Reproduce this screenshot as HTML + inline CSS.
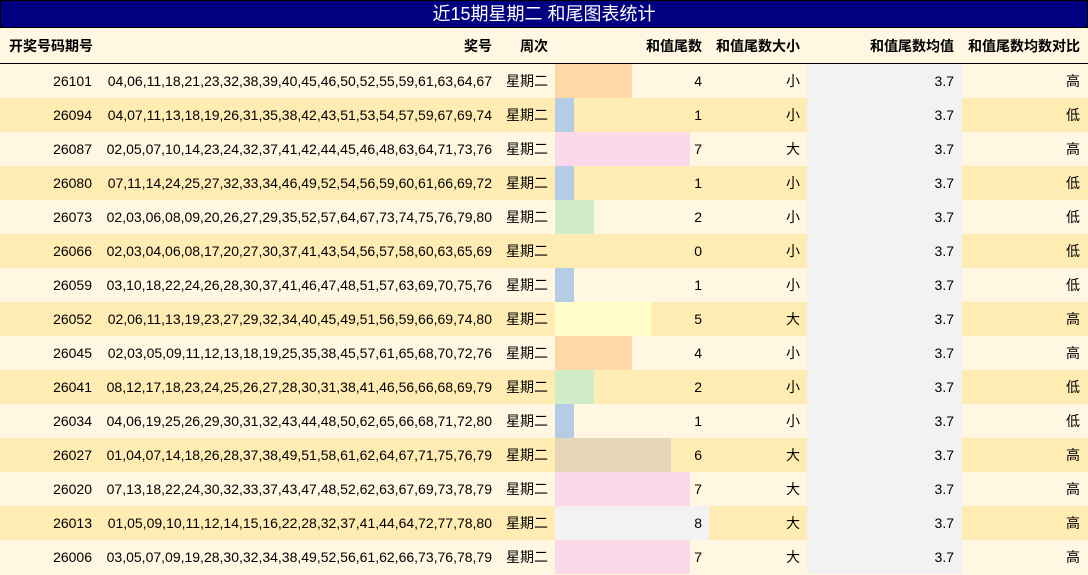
<!DOCTYPE html>
<html><head><meta charset="utf-8"><style>
*{margin:0;padding:0;box-sizing:border-box}
body{width:1088px;height:575px;overflow:hidden;background:#fff7e1;font-family:"Liberation Sans","Noto Sans CJK SC",sans-serif;font-size:14px;color:#000;position:relative}
.t{position:absolute;left:0;top:0;width:1088px;height:28px;background:#000080;border:1px solid #000;color:#fff;font-size:18px;text-align:center;line-height:26px}
.h{position:absolute;left:0;top:28px;width:1088px;height:36px;background:#fff7e1;border-bottom:1px solid #000;font-weight:bold}
.r{position:absolute;left:0;width:1088px;height:34px}
.c{position:absolute;top:0;height:100%;line-height:34px;text-align:right;white-space:nowrap}
.h .c{line-height:36px}
.b{position:absolute;left:555px;top:0;height:34px}
.g{position:absolute;left:807px;top:0;width:155px;height:34px;background:#f2f2f2}
</style></head><body>
<div class="t">近15期星期二 和尾图表统计</div>
<div class="h">
<div class="c" style="left:0;width:93px">开奖号码期号</div>
<div class="c" style="left:100px;width:392px">奖号</div>
<div class="c" style="left:497px;width:51px">周次</div>
<div class="c" style="left:555px;width:147px">和值尾数</div>
<div class="c" style="left:708px;width:92px">和值尾数大小</div>
<div class="c" style="left:807px;width:147px">和值尾数均值</div>
<div class="c" style="left:962px;width:118px">和值尾数均数对比</div>
</div>
<div id="rows"></div>
<script>
var d=[["26101","04,06,11,18,21,23,32,38,39,40,45,46,50,52,55,59,61,63,64,67",4,"小","高"],
["26094","04,07,11,13,18,19,26,31,35,38,42,43,51,53,54,57,59,67,69,74",1,"小","低"],
["26087","02,05,07,10,14,23,24,32,37,41,42,44,45,46,48,63,64,71,73,76",7,"大","高"],
["26080","07,11,14,24,25,27,32,33,34,46,49,52,54,56,59,60,61,66,69,72",1,"小","低"],
["26073","02,03,06,08,09,20,26,27,29,35,52,57,64,67,73,74,75,76,79,80",2,"小","低"],
["26066","02,03,04,06,08,17,20,27,30,37,41,43,54,56,57,58,60,63,65,69",0,"小","低"],
["26059","03,10,18,22,24,26,28,30,37,41,46,47,48,51,57,63,69,70,75,76",1,"小","低"],
["26052","02,06,11,13,19,23,27,29,32,34,40,45,49,51,56,59,66,69,74,80",5,"大","高"],
["26045","02,03,05,09,11,12,13,18,19,25,35,38,45,57,61,65,68,70,72,76",4,"小","高"],
["26041","08,12,17,18,23,24,25,26,27,28,30,31,38,41,46,56,66,68,69,79",2,"小","低"],
["26034","04,06,19,25,26,29,30,31,32,43,44,48,50,62,65,66,68,71,72,80",1,"小","低"],
["26027","01,04,07,14,18,26,28,37,38,49,51,58,61,62,64,67,71,75,76,79",6,"大","高"],
["26020","07,13,18,22,24,30,32,33,37,43,47,48,52,62,63,67,69,73,78,79",7,"大","高"],
["26013","01,05,09,10,11,12,14,15,16,22,28,32,37,41,44,64,72,77,78,80",8,"大","高"],
["26006","03,05,07,09,19,28,30,32,34,38,49,52,56,61,62,66,73,76,78,79",7,"大","高"]];
var col={0:"",1:"#b4cde4",2:"#d0ecc8",4:"#ffd8a8",5:"#ffffcc",6:"#e6d6b8",7:"#fcd9e8",8:"#f2f2f2"};
var h="";
d.forEach(function(x,i){
var bg=i%2?"#ffecb3":"#fff7e1";
var w=Math.round(x[2]*19.25);
h+='<div class="r" style="top:'+(64+i*34)+'px;background:'+bg+'">'+
(x[2]?'<div class="b" style="width:'+w+'px;background:'+col[x[2]]+'"></div>':'')+
'<div class="g"></div>'+
'<div class="c" style="left:0;width:92px">'+x[0]+'</div>'+
'<div class="c" style="left:100px;width:392px">'+x[1]+'</div>'+
'<div class="c" style="left:497px;width:51px">星期二</div>'+
'<div class="c" style="left:555px;width:147px">'+x[2]+'</div>'+
'<div class="c" style="left:708px;width:92px">'+x[3]+'</div>'+
'<div class="c" style="left:807px;width:147px">3.7</div>'+
'<div class="c" style="left:962px;width:118px">'+x[4]+'</div></div>';
});
document.getElementById("rows").innerHTML=h;
</script>
</body></html>
